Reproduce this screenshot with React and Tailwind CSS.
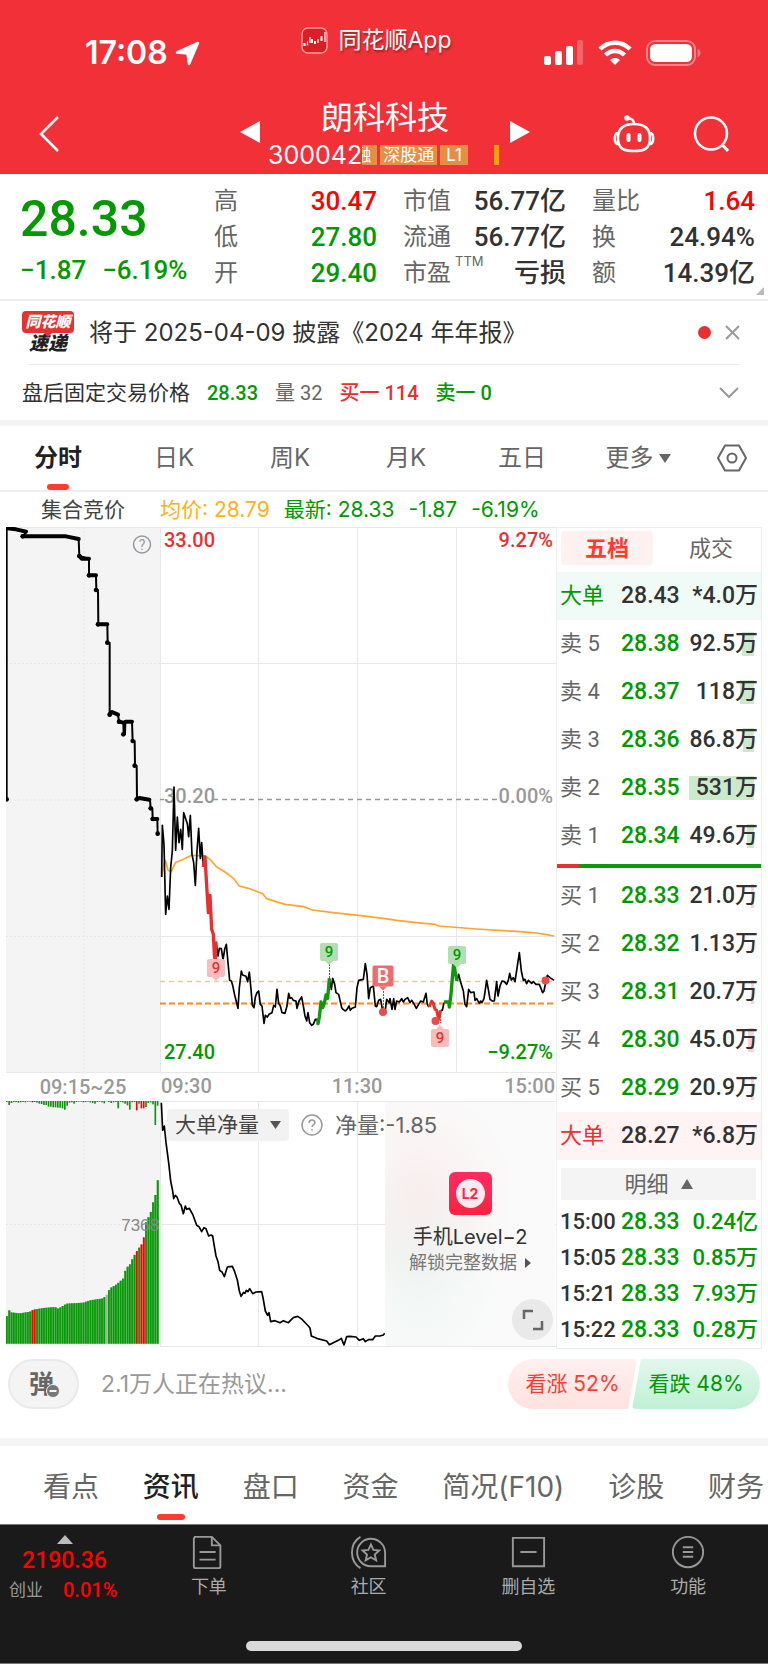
import { useState } from "react";
import clsx from "clsx";

const DIN = "[font-family:Roboto,'Noto_Sans_CJK_SC',sans-serif]";

const QUOTE_STATS = [
  [
    { label: "高", value: "30.47", color: "text-[#ff0000]" },
    { label: "低", value: "27.80", color: "text-[#009900]" },
    { label: "开", value: "29.40", color: "text-[#009900]" },
  ],
  [
    { label: "市值", value: "56.77亿", color: "text-[#323232]" },
    { label: "流通", value: "56.77亿", color: "text-[#323232]" },
    { label: "市盈", sup: "TTM", value: "亏损", color: "text-[#323232]" },
  ],
  [
    { label: "量比", value: "1.64", color: "text-[#ff0000]" },
    { label: "换", value: "24.94%", color: "text-[#323232]" },
    { label: "额", value: "14.39亿", color: "text-[#323232]" },
  ],
];

const PERIODS = ["分时", "日K", "周K", "月K", "五日"];

const SELLS = [
  { label: "卖 5", price: "28.38", vol: "92.5万", depth: 12 },
  { label: "卖 4", price: "28.37", vol: "118万", depth: 14 },
  { label: "卖 3", price: "28.36", vol: "86.8万", depth: 11 },
  { label: "卖 2", price: "28.35", vol: "531万", depth: 65 },
  { label: "卖 1", price: "28.34", vol: "49.6万", depth: 7 },
];

const BUYS = [
  { label: "买 1", price: "28.33", vol: "21.0万", depth: 3 },
  { label: "买 2", price: "28.32", vol: "1.13万", depth: 0 },
  { label: "买 3", price: "28.31", vol: "20.7万", depth: 3 },
  { label: "买 4", price: "28.30", vol: "45.0万", depth: 6 },
  { label: "买 5", price: "28.29", vol: "20.9万", depth: 3 },
];

const TRADES = [
  { time: "15:00", price: "28.33", vol: "0.24亿" },
  { time: "15:05", price: "28.33", vol: "0.85万" },
  { time: "15:21", price: "28.33", vol: "7.93万" },
  { time: "15:22", price: "28.33", vol: "0.28万" },
];

const SECTIONS = ["看点", "资讯", "盘口", "资金", "简况(F10)", "诊股", "财务"];

const AUCTION =
  "20,835 20,22 48,26 78,34 68,46 198,46 236,54 238,105 267,113 267,163 288,163 289,207 294,207 295,310 322,310 323,365 329,365 329,582 336,573 354,581 357,602 370,605 371,640 375,640 376,602 396,602 398,660 404,660 405,734 410,734 411,835 418,831 450,837 452,862 457,862 458,894 472,894 473,938";
const AUCTION_BOLD =
  "M22 22L48 25L78 32M68 46H198L236 54M238 105L245 113H267M267 163H288M294 310H322M329 580L336 573L354 581M357 602L370 605M376 602H396M411 834L418 831L448 836M457 894H472";
const AUCTION_DOTS = [[20, 835], [68, 46], [238, 105], [267, 163], [288, 207], [294, 310], [322, 365], [329, 581], [357, 602], [370, 640], [398, 660], [404, 734], [410, 835], [452, 862], [459, 894], [473, 938]];

const AVERAGE =
  "35,318 40,285 46,268 54,298 64,302 76,275 100,265 125,253 165,255 180,265 200,288 225,303 250,322 268,345 295,352 338,368 350,383 375,391 405,400 462,407 487,417 550,425 625,433 700,442 740,448 800,455 855,460 865,465 980,474 1110,482 1160,486 1190,491 1212,495";

const PRICE = [
  { color: "#000", width: 4, points: "35,318 37,163 42,220 47,430 52,375 57,415 62,290 67,240 72,48 77,238 82,138 87,215 92,175 97,235 101,125 106,140 112,158 116,197 121,133 126,250 131,275 136,343 141,240 146,172 151,262 155,215 160,288" },
  { color: "#000", width: 4, points: "198,512 204,555 208,532 214,533 219,567 224,535 229,520 234,575 239,628 244,630 248,643 254,672 264,712 268,650 274,600 278,612 288,616 293,632 298,603 303,655 307,703 312,710 316,678 321,665 326,660 331,700 336,705 342,757 346,733 352,738 357,730 366,725 371,703 376,708 381,655 386,697 391,705 396,725 405,727 411,705 416,667 420,682 425,680 430,688 438,690 441,712 447,690 455,678 460,705 465,735 470,750 474,725 479,755 485,763 490,760 496,745 503,745" },
  { color: "#000", width: 4, points: "538,622 544,655 548,622 554,640 558,665 566,670 575,710 580,716 586,720 591,715 597,705 601,718 606,712 616,708 621,650 626,628 640,625 646,578 651,610 656,683 661,650 670,645 676,705 680,707 686,688 692,685 698,720 705,725 710,685 718,695 720,683 726,715 731,683 735,715 740,690 748,693 755,683 760,693 765,685 773,680 780,695 785,688 791,697 799,712 806,700 812,690 820,693 828,667 832,700 837,708" },
  { color: "#000", width: 4, points: "872,718 877,718 882,695" },
  { color: "#000", width: 4, points: "921,630 926,610 931,630 940,660 945,700 950,707 956,655 962,665 972,663 975,688 980,683 988,697 992,690 996,695 1002,683 1010,628 1015,655 1020,685 1027,690 1033,690 1040,632 1044,675 1050,645 1056,630 1063,632 1070,640 1075,628 1079,607 1084,627 1090,620 1095,632 1108,545 1114,600 1120,628 1125,625 1130,638 1135,628 1145,637 1150,632 1158,640 1168,640 1178,665 1182,660 1188,630 1192,613 1200,620 1212,628" },
  { color: "#e93030", width: 9, points: "160,288 165,258 168,310 175,425 180,373 185,475 190,490 195,583 198,512" },
  { color: "#0a9a0a", width: 9, points: "503,745 504,758 508,738 513,693 518,710 523,697 528,672 533,682 538,622" },
  { color: "#e93030", width: 8, points: "837,708 845,690 850,697 855,715 860,718 866,745 872,718" },
  { color: "#0a9a0a", width: 9, points: "882,693 896,693 898,708 903,670 908,610 911,578 916,605 921,630" },
];

const NET =
  "484,95 488,178 493,165 498,215 506,275 512,330 518,360 521,383 526,373 531,378 538,397 543,402 550,428 556,405 560,415 568,412 578,430 590,463 597,467 605,482 612,470 618,473 626,495 633,492 638,495 642,520 648,555 654,572 659,598 666,603 673,617 682,588 690,587 697,586 704,602 712,627 718,660 723,676 731,664 735,667 739,658 744,662 749,653 758,668 768,663 785,662 789,680 796,720 803,733 807,725 812,752 825,749 840,755 850,749 865,755 880,740 893,736 905,744 925,765 930,771 934,795 950,802 980,810 988,821 1000,815 1018,806 1024,802 1032,822 1040,797 1050,796 1068,798 1078,808 1090,803 1096,812 1105,806 1118,806 1126,795 1140,795 1150,792 1154,787";

// tops of the auction volume bars, in chart units
const VOLUME_TOPS = [[18, 752], [25, 714], [32, 724], [60, 727], [90, 722], [100, 716], [130, 711], [165, 708], [175, 713], [200, 698], [250, 695], [270, 688], [310, 682], [320, 672], [330, 652], [350, 640], [370, 622], [378, 592], [390, 580], [400, 558], [412, 538], [425, 520], [432, 498], [438, 455], [445, 440], [452, 425], [460, 392], [466, 375], [473, 328]];

const UNMATCHED = [
  3, 12, 6, 3, 3, 5, 4, 3, 4, 2, 2, 4, 3, 5, 8, 9, 12, 12, 17, 17, 19, 19, 20, 20, 22, 26, 14, 5, 4, 8, 3, 2,
  2, 4, 3, 2, 4, 6, 8, 3, 2, 4, 7, 2, 3, 6, 4, 3, 22, 3, 4, 8, 13, 26, 4, 3, 28, 8, 22, 22, 18, 6, 4, 10, 72, 14,
];

function topAt(x) {
  const i = VOLUME_TOPS.findIndex(([px]) => px >= x);
  if (i <= 0) return VOLUME_TOPS[i === 0 ? 0 : VOLUME_TOPS.length - 1][1];
  const [x0, y0] = VOLUME_TOPS[i - 1];
  const [x1, y1] = VOLUME_TOPS[i];
  return y0 + ((y1 - y0) * (x - x0)) / (x1 - x0);
}

function barColor(i) {
  if ([11, 12, 56, 58, 59].includes(i)) return ["#ff0000", "#ff6666"];
  if (i === 43) return ["#aaa", "#bbb"];
  return ["#0b980b", "#56b656"];
}

function StatusBar() {
  return (
    <div className="grid h-[90px] grid-cols-[1fr_auto_1fr] text-white">
      <div className="flex items-center gap-[7px] pt-4 pl-[85px]">
        <span className="text-[32px] leading-9 font-semibold">17:08</span>
        <svg className="h-[25px] w-[25px]" viewBox="0 0 25 25" fill="#fff" stroke="#fff" strokeWidth="2.500" strokeLinejoin="round">
          <path d="M23 2 14 23l-1.500-10.500L2 11.500z" />
        </svg>
      </div>
      <div className="flex h-20 items-center gap-[10px] pr-[15px]">
        <svg className="h-[27px] w-[27px]" viewBox="0 0 27 27">
          <rect x="1" y="1" width="25" height="25" rx="6" fill="#d81f25" stroke="#ff9a9c" strokeWidth="1.500" />
          <path d="M3.500 16v3M11 12v4M14 14v3M20.500 9v5" stroke="#fff" strokeWidth="2" />
          <path d="M6.500 14.500v4M9 10v6M17 12v4M24 5v10" stroke="#fff" strokeWidth="1.200" />
        </svg>
        <span className="text-[23px] leading-7 [text-shadow:1px_2px_2px_rgba(0,0,0,0.35)]">同花顺App</span>
      </div>
      <div className="flex items-center justify-end gap-[14px] pt-4 pr-[67px]">
        <svg className="h-[26px] w-10" viewBox="0 0 40 26" fill="#fff">
          <rect x="0" y="16" width="7" height="9" rx="2" />
          <rect x="11" y="11" width="7" height="14" rx="2" />
          <rect x="22" y="6" width="7" height="19" rx="2" />
          <rect x="33" y="0" width="6" height="25" rx="2" opacity=".25" />
        </svg>
        <svg className="h-[26px] w-[34px]" viewBox="0 0 34 26" fill="none" stroke="#fff" strokeWidth="4.500">
          <path d="M2 9c8-8.500 22-8.500 30 0" />
          <path d="M7.500 15c5.500-5.500 13.500-5.500 19 0" />
          <path d="M17 25l-5-5c3-2.600 7-2.600 10 0z" fill="#fff" stroke="none" />
        </svg>
        <svg className="h-[26px] w-[55px]" viewBox="0 0 55 26">
          <rect x="1" y="1" width="48" height="24" rx="8" fill="none" stroke="#fff" strokeOpacity=".4" strokeWidth="2" />
          <rect x="4" y="4" width="42" height="18" rx="5.500" fill="#fff" />
          <path d="M51.500 9c4 1 4 7 0 8z" fill="#fff" opacity=".4" />
        </svg>
      </div>
    </div>
  );
}

function TitleBar() {
  return (
    <div className="grid h-[84px] grid-cols-[1fr_auto_1fr] text-white">
      <div className="flex items-center pt-1 pl-[39px]">
        <button aria-label="返回">
          <svg className="h-9 w-5" viewBox="0 0 20 36" fill="none" stroke="#fff" strokeWidth="2.500">
            <path d="M19 1 2 18l17 17" />
          </svg>
        </button>
      </div>
      <div className="flex items-center gap-2 pl-[2px]">
        <button aria-label="上一只">
          <svg className="h-[22px] w-5" viewBox="0 0 20 22" fill="#fff"><path d="M20 0v22L0 11z" /></svg>
        </button>
        <div className="flex w-[234px] flex-col items-center">
          <h1 className="text-[32px] leading-[46px]">朗科科技</h1>
          <div className="flex h-7 w-full items-center gap-[3px] pr-[3px]">
            <span className="text-[25px] leading-7">300042</span>
            <span className="-ml-[3px] flex h-5 w-[15px] justify-end overflow-hidden bg-[#e58e46] pr-[6px] text-[17px] leading-5">融</span>
            <span className="h-5 bg-[#e58e46] px-[3px] text-[17px] leading-5">深股通</span>
            <span className="h-5 bg-[#e58e46] px-[6px] text-[17px] leading-5">L1</span>
            <span className="ml-auto h-5 w-[5px] bg-[#ff9d10]" />
          </div>
        </div>
        <button aria-label="下一只">
          <svg className="h-[22px] w-5" viewBox="0 0 20 22" fill="#fff"><path d="M0 0v22l20-11z" /></svg>
        </button>
      </div>
      <div className="flex items-center justify-end gap-[38px] pt-1 pr-[39px]">
        <button aria-label="助手">
          <svg className="h-[38px] w-[42px]" viewBox="0 0 42 38" fill="none" stroke="#fff" strokeWidth="2.500" strokeLinecap="round">
            <path d="M21 9c9 0 16 3 16 14s-6 13-16 13S5 34 5 23 12 9 21 9z" />
            <path d="M4 18c-3 2-3 9 0 11M38 18c3 2 3 9 0 11" />
            <path d="M21 9c0-4-2-5-6-6" />
            <circle cx="14" cy="3" r="1.500" fill="#fff" />
            <path d="M15.500 20v5M26.500 20v5" strokeWidth="4" />
          </svg>
        </button>
        <button aria-label="搜索">
          <svg className="h-9 w-9" viewBox="0 0 36 36" fill="none" stroke="#fff" strokeWidth="2.500">
            <circle cx="18" cy="17.500" r="16" />
            <path d="M29 28.500 35 35" strokeWidth="3" />
          </svg>
        </button>
      </div>
    </div>
  );
}

function Quote() {
  return (
    <section className="relative grid grid-cols-[168fr_163fr_163fr_163fr] gap-x-[26px] border-b-2 border-[#eee] pt-[9px] pr-[13px] pb-2 pl-5">
      <div className={clsx("whitespace-nowrap text-[#009900]", DIN)}>
        <div className="pt-3 text-[50px] leading-[48px] font-medium">28.33</div>
        <div className="flex gap-4 pt-[11px] text-[26px] leading-8 font-medium">
          <span>−1.87</span>
          <span>−6.19%</span>
        </div>
      </div>
      {QUOTE_STATS.map((col) => (
        <dl key={col[0].label}>
          {col.map((s) => (
            <div key={s.label} className="flex h-9 items-center justify-between whitespace-nowrap">
              <dt className="flex text-2xl leading-8 text-[#666]">
                {s.label}
                {s.sup && <sup className="-top-1 pl-1 text-[13px] leading-4">{s.sup}</sup>}
              </dt>
              <dd className={clsx("text-[26px] leading-8 font-medium", DIN, s.color)}>{s.value}</dd>
            </div>
          ))}
        </dl>
      ))}
      <svg className="absolute right-1 bottom-1 h-2 w-2" viewBox="0 0 8 8" fill="#bbb"><path d="M8 0v8H0z" /></svg>
    </section>
  );
}

function Notice() {
  return (
    <section className="border-b-[6px] border-[#f4f4f4] px-[22px]">
      <div className="flex h-[63px] items-center">
        <div className="flex w-[52px] flex-col items-center">
          <span className="relative rounded-sm bg-[#e93030] px-[3px] text-[15px] leading-[22px] font-black text-white italic">
            同花顺
            <span className="absolute top-full left-1/2 h-0 w-0 -translate-x-1/2 border-x-4 border-t-4 border-x-transparent border-t-[#e93030]" />
          </span>
          <span className="text-[19px] leading-[22px] font-black text-[#222] italic">速递</span>
        </div>
        <a href="#report" className="flex-1 pl-[15px] text-2xl leading-8 text-[#323232]">
          将于 2025-04-09 披露《2024 年年报》
        </a>
        <span className="h-[13px] w-[13px] rounded-full bg-[#e93030]" />
        <button aria-label="关闭" className="mr-[6px] ml-[14px]">
          <svg className="h-[15px] w-[15px]" viewBox="0 0 15 15" stroke="#999" strokeWidth="2"><path d="M1 1l13 13M14 1 1 14" /></svg>
        </button>
      </div>
      <div className="mx-[7px] h-px bg-[#e8e8e8]" />
      <div className={clsx("flex h-[55px] items-center gap-[17px] text-[21px] leading-7", DIN)}>
        <span className="text-[#323232]">盘后固定交易价格</span>
        <span className="text-[20px] font-medium text-[#009900]">28.33</span>
        <span className="text-[20px] text-[#666]">量 32</span>
        <span className="text-[20px] font-medium text-[#e93030]">买一 114</span>
        <span className="text-[20px] font-medium text-[#009900]">卖一 0</span>
        <button aria-label="展开" className="mr-[7px] ml-auto">
          <svg className="h-[11px] w-5" viewBox="0 0 20 11" fill="none" stroke="#999" strokeWidth="2"><path d="M1 1l9 9 9-9" /></svg>
        </button>
      </div>
    </section>
  );
}

function PeriodTabs({ active, onChange }) {
  return (
    <nav className="flex h-[66px] border-b-2 border-[#eee] text-2xl leading-8 text-[#666]">
      {PERIODS.map((p) => (
        <button
          key={p}
          onClick={() => onChange(p)}
          className={clsx("relative flex-1", active === p && "font-bold text-[#222]")}
        >
          {p}
          {active === p && <span className="absolute bottom-0 left-1/2 h-[6px] w-[22px] -translate-x-1/2 rounded-sm bg-[#ff3b30]" />}
        </button>
      ))}
      <button className="flex flex-1 items-center justify-center gap-[5px]">
        更多
        <svg className="h-[9px] w-3" viewBox="0 0 12 9" fill="#666"><path d="M0 0h12L6 9z" /></svg>
      </button>
      <button aria-label="设置" className="flex w-[72px] items-center justify-center">
        <svg className="h-7 w-[30px]" viewBox="0 0 30 28" fill="none" stroke="#666" strokeWidth="2" strokeLinejoin="round">
          <path d="M8 1.500h14L29 14l-7 12.500H8L1 14z" />
          <circle cx="15" cy="14" r="4.500" />
        </svg>
      </button>
    </nav>
  );
}

function Flag({ x, y, fill, color, text, down, big }) {
  const s = big ? 21 : 18;
  return (
    <g>
      <rect x={x - s / 2} y={y - s / 2} width={s} height={s} rx="2" fill={fill} />
      <path d={down ? `M${x - 4} ${y - s / 2}h8l-4-4z` : `M${x - 4} ${y + s / 2}h8l-4 4z`} fill={fill} />
      <text x={x} y={y + (big ? 7 : 5)} textAnchor="middle" fill={color} fontSize={big ? 20 : 15} fontWeight="500">{text}</text>
    </g>
  );
}

function PriceChart() {
  return (
    <svg className={clsx("block w-full", DIN)} viewBox="6 526 550 574">
      <rect x="6" y="526" width="154" height="545" fill="#f4f4f4" />
      <g stroke="#e8e8e8" strokeDasharray="2 2">
        <path d="M84 526v545M6 662.500h154M6 799h154M6 935.500h154" />
      </g>
      <path d="M6 526.500h550M160.500 526v545M258.500 526v545M357.500 526v545M456.500 526v545M160 662.500h396M160 935.500h396M6 1071.500h550" stroke="#e8e8e8" fill="none" />
      <path d="M160 798.500h4M213 798.500h284" stroke="#999" strokeWidth="1.500" strokeDasharray="5 4" />
      <path d="M160 980.500h394" stroke="#e8c9a0" strokeWidth="1.500" strokeDasharray="5 4" />
      <path d="M160 1002.500h394" stroke="#ff8a1f" strokeWidth="2" strokeDasharray="6 3" />

      <g transform="translate(0 520) scale(.333333)" fill="none" stroke="#000" strokeLinejoin="round" strokeLinecap="round">
        <polyline points={AUCTION} strokeWidth="6" />
        <path d={AUCTION_BOLD} strokeWidth="12" />
        {AUCTION_DOTS.map(([x, y]) => (
          <circle key={`${x}-${y}`} cx={x} cy={y} r="7" fill="#000" stroke="none" />
        ))}
      </g>

      <g fontSize="20" fontWeight="500">
        <text x="164" y="546" fill="#e93030">33.00</text>
        <text x="553" y="546" fill="#e93030" textAnchor="end">9.27%</text>
        <text x="164" y="802" fill="#999">30.20</text>
        <text x="553" y="802" fill="#999" textAnchor="end">0.00%</text>
        <text x="164" y="1058" fill="#009900">27.40</text>
        <text x="553" y="1058" fill="#009900" textAnchor="end">−9.27%</text>
      </g>

      <g transform="translate(150 770) scale(.333333)" fill="none" strokeLinejoin="round">
        <polyline points={AVERAGE} stroke="#ffa52b" strokeWidth="5" />
        {PRICE.map((seg) => (
          <polyline key={seg.points} points={seg.points} stroke={seg.color} strokeWidth={seg.width + 1} />
        ))}
      </g>

      <path d="M329.500 963v14" stroke="#009900" strokeDasharray="2 1" />
      <path d="M383.500 987v20M440.500 1012v10" stroke="#e93030" strokeDasharray="2 1" />
      <g fill="#ea4b4d">
        <circle cx="383" cy="1011" r="4" />
        <circle cx="435.500" cy="1020" r="4" />
        <circle cx="545.500" cy="979.500" r="4" />
      </g>
      <Flag x={216} y={967} fill="#f9bcbc" color="#e93030" text="9" />
      <Flag x={329} y={951} fill="#b2dfb2" color="#009900" text="9" />
      <Flag x={457} y={954} fill="#b2dfb2" color="#009900" text="9" />
      <Flag x={440} y={1037} fill="#f9bcbc" color="#e93030" text="9" down />
      <Flag x={383} y={975} fill="#f06b6d" color="#fff" text="B" big />

      <g fill="none" stroke="#999" strokeWidth="1.500">
        <circle cx="142" cy="543.500" r="8.500" />
      </g>
      <text x="142" y="549" textAnchor="middle" fontSize="14" fill="#999">?</text>

      <g fontSize="20" fill="#999" fontWeight="500">
        <text x="83" y="1093" textAnchor="middle">09:15~25</text>
        <text x="161" y="1092">09:30</text>
        <text x="357" y="1092" textAnchor="middle">11:30</text>
        <text x="555" y="1092" textAnchor="end">15:00</text>
      </g>
    </svg>
  );
}

function NetChart() {
  return (
    <div className="relative">
      <svg className={clsx("block w-full", DIN)} viewBox="6 1100 550 246">
        <rect x="6" y="1100" width="154" height="245" fill="#f4f4f4" />
        <path d="M84 1100v245M6 1223.500h154" stroke="#e8e8e8" strokeDasharray="2 2" />
        <path d="M6 1100.500h550M160.500 1100v245M258.500 1100v245M357.500 1100v245M160 1223.500h396M160 1345.500h396" stroke="#e8e8e8" fill="none" />
        <g transform="translate(0 1070) scale(.333333)">
          {UNMATCHED.map((h, i) => {
            const x = 18 + i * 6.96;
            const [main, light] = barColor(i);
            const top = topAt(x + 3);
            return (
              <g key={i}>
                <rect x={x} y={top} width="7" height={818 - top} fill={light} />
                <rect x={x} y={top} width="5" height={818 - top} fill={main} />
                <rect x={x} y="90" width="5" height={h} fill={main} />
              </g>
            );
          })}
          <polyline points={NET} fill="none" stroke="#000" strokeWidth="5" strokeLinejoin="round" />
        </g>
        <text x="159" y="1230" textAnchor="end" fontSize="17" fill="#888" className="[font-family:'Liberation_Sans',sans-serif]">7368</text>
      </svg>

      <div className="absolute top-px right-px bottom-px flex w-[170px] flex-col items-center bg-[#fafafa] bg-[radial-gradient(ellipse_at_20%_38%,rgba(255,90,90,0.07),transparent_50%),radial-gradient(ellipse_at_20%_68%,rgba(60,200,150,0.06),transparent_45%)] pt-[70px]">
        <span className="flex h-[43px] w-[43px] items-center justify-center rounded-md bg-gradient-to-t from-[#ff2040] to-[#ff2b62]">
          <span className="flex h-[29px] w-[29px] items-center justify-center rounded-full bg-[#ffe9ee] text-[14px] leading-4 font-bold text-[#ff2448]">L2</span>
        </span>
        <span className="pt-2 text-[20px] leading-7 text-[#323232]">手机Level−2</span>
        <a href="#level2" className="flex items-center gap-2 text-[18px] leading-6 text-[#777]">
          解锁完整数据
          <svg className="h-[10px] w-[6px]" viewBox="0 0 6 10" fill="#555"><path d="M0 0l6 5-6 5z" /></svg>
        </a>
      </div>
      <button aria-label="全屏" className="absolute right-[3px] bottom-[7px] flex h-[41px] w-[41px] items-center justify-center rounded-full bg-[#e9e9e9]">
        <svg className="h-[22px] w-[22px]" viewBox="0 0 22 22" fill="none" stroke="#666" strokeWidth="2.500">
          <path d="M2 10V2h9M20 12v8h-9" />
        </svg>
      </button>

      <div className="absolute top-2 left-[161px] flex items-center text-[21px] leading-8 text-[#666]">
        <button className="flex items-center gap-[11px] rounded-sm bg-[#f2f2f2] px-2 text-[#444]">
          大单净量
          <svg className="h-2 w-[11px]" viewBox="0 0 11 8" fill="#555"><path d="M0 0h11L5.500 8z" /></svg>
        </button>
        <svg className="mr-3 ml-3 h-[22px] w-[22px]" viewBox="0 0 22 22" fill="none" stroke="#999" strokeWidth="1.500">
          <circle cx="11" cy="11" r="10" />
          <path d="M8 9c0-4 6-4 6-.500 0 2-3 2.200-3 4.500M11 15v1.500" />
        </svg>
        <span className="text-[22px]">净量:-1.85</span>
      </div>
    </div>
  );
}

function Rows({ rows, barClass }) {
  return rows.map((r) => (
    <tr key={r.label} className="h-12">
      <td className="w-[64px] pl-[3px] text-[22px] text-[#666]">{r.label}</td>
      <td className="font-medium text-[#009900]">{r.price}</td>
      <td className="relative pr-[3px] text-right font-medium text-[#323232]">
        <span className={clsx("absolute top-3 right-[7px] h-6", barClass)} style={{ width: r.depth }} />
        <span className="relative">{r.vol}</span>
      </td>
    </tr>
  ));
}

function BigOrder({ price, vol, rowClass, labelClass }) {
  return (
    <tr className={clsx("h-12", rowClass)}>
      <td className={clsx("w-[64px] pl-[3px] text-[22px]", labelClass)}>大单</td>
      <td className="font-medium text-[#323232]">{price}</td>
      <td className="pr-[3px] text-right font-medium text-[#323232]">{vol}</td>
    </tr>
  );
}

function OrderBook() {
  const table = clsx("w-full text-[23px] leading-6 whitespace-nowrap", DIN);
  return (
    <aside className="w-[206px] border border-[#eee]">
      <div className="flex h-11 items-start pt-[3px] pl-1 text-[22px] leading-[34px]">
        <button className="w-[92px] rounded-sm bg-[#fff1f0] font-bold text-[#ff3b30]">五档</button>
        <button className="flex-1 pl-2 text-[#666]">成交</button>
      </div>
      <table className={table}>
        <tbody>
          <BigOrder price="28.43" vol="*4.0万" rowClass="bg-[#f0faf6]" labelClass="text-[#009900]" />
          <Rows rows={SELLS} barClass="bg-[#cbeacb]" />
        </tbody>
      </table>
      <div className="my-1 flex h-1 bg-[#0a9a0a]">
        <span className="w-[22px] bg-[#e93030]" />
      </div>
      <table className={table}>
        <tbody>
          <Rows rows={BUYS} barClass="bg-[#fdd0d2]" />
          <BigOrder price="28.27" vol="*6.8万" rowClass="bg-[#fff3f3]" labelClass="text-[#e93030]" />
        </tbody>
      </table>
      <button className="mx-1 mt-2 mb-1 flex h-8 w-[195px] items-center justify-center gap-3 bg-[#f4f4f4] text-[22px] leading-8 text-[#666]">
        明细
        <svg className="h-[10px] w-3" viewBox="0 0 12 10" fill="#666"><path d="M6 0l6 10H0z" /></svg>
      </button>
      <table className={table}>
        <tbody>
          {TRADES.map((t) => (
            <tr key={t.time} className="h-9 text-[22px] font-medium">
              <td className="w-[64px] pl-[3px] text-[#323232]">{t.time}</td>
              <td className="text-[23px] text-[#009900]">{t.price}</td>
              <td className="pr-[3px] text-right text-[#009900]">{t.vol}</td>
            </tr>
          ))}
        </tbody>
      </table>
    </aside>
  );
}

function Discussion() {
  return (
    <section className="flex h-[97px] items-start border-b-8 border-[#f4f4f4] px-2 pt-[10px]">
      <button className="relative flex h-[50px] w-[71px] items-center justify-center rounded-full border-2 border-[#eaeaea] bg-[#f4f4f4] pr-1 text-[25px] leading-8 font-bold text-[#666]">
        弹
        <svg className="absolute right-[17px] bottom-[9px] h-[14px] w-[14px]" viewBox="0 0 14 14">
          <circle cx="7" cy="7" r="6.500" fill="#777" stroke="#f4f4f4" />
          <path d="M3.500 7h7" stroke="#f4f4f4" strokeWidth="2" />
        </svg>
      </button>
      <input
        type="text"
        aria-label="评论"
        placeholder="2.1万人正在热议..."
        className="h-[50px] min-w-0 flex-1 pl-[22px] text-[23px] leading-8 placeholder:text-[#999]"
      />
      <div className="flex text-[21px] leading-[50px] whitespace-nowrap">
        <button className="w-[129px] bg-gradient-to-b from-[#fff0ef] to-[#ffe2df] text-[#ff3b30] [border-radius:25px_4px_4px_25px] [clip-path:polygon(0_0,100%_0,93%_100%,0_100%)]">
          看涨 52%
        </button>
        <button className="-ml-[5px] w-[128px] bg-gradient-to-b from-[#e2f8ec] to-[#bff0d4] text-[#009900] [border-radius:4px_25px_25px_4px] [clip-path:polygon(7%_0,100%_0,100%_100%,0_100%)]">
          看跌 48%
        </button>
      </div>
    </section>
  );
}

function SectionTabs({ active, onChange }) {
  return (
    <nav className="flex h-[78px] justify-between pr-1 pl-[43px] text-[28px] leading-10 whitespace-nowrap text-[#666]">
      {SECTIONS.map((s) => (
        <button
          key={s}
          onClick={() => onChange(s)}
          className={clsx("relative pt-[3px]", active === s && "font-medium text-[#222]")}
        >
          {s}
          {active === s && <span className="absolute bottom-1 left-1/2 h-[6px] w-7 -translate-x-1/2 rounded-full bg-[#ff3b30]" />}
        </button>
      ))}
    </nav>
  );
}

const NAV = [
  {
    label: "下单",
    icon: (
      <>
        <path d="M4 2h18l9 9v22a2 2 0 0 1-2 2H5a2 2 0 0 1-2-2V4z" />
        <path d="M22 2v9h9M9 18h17M9 26h17" />
      </>
    ),
  },
  {
    label: "社区",
    icon: (
      <>
        <path d="M21 4a15 15 0 0 1 15 15v14H21a14.500 14.500 0 0 1 0-29zM10 2C-2 9-2 28 10 35" />
        <path d="M21 10l2.600 5.800 6.200.6-4.700 4.200 1.400 6.200-5.500-3.300-5.500 3.300 1.400-6.200-4.700-4.200 6.200-.6z" />
      </>
    ),
  },
  {
    label: "删自选",
    icon: <path d="M3 3h33v30H3zM11 18h17" />,
  },
  {
    label: "功能",
    icon: (
      <>
        <circle cx="19" cy="18" r="16" />
        <path d="M13.500 13h11M13.500 18h11M13.500 23h11" />
      </>
    ),
  },
];

function BottomNav() {
  return (
    <footer className="border-y border-[#777] bg-[#1a1a1a]">
      <nav className="flex h-[116px] pt-[10px]">
        <a href="#index" className={clsx("flex w-[129px] flex-col items-center text-[#ff0000]", DIN)}>
          <svg className="h-[9px] w-4" viewBox="0 0 16 9" fill="#bbb"><path d="M8 0l8 9H0z" /></svg>
          <span className="text-[23px] leading-[34px] font-medium">2190.36</span>
          <span className="flex w-full items-center gap-5 pl-[9px] text-[20px] leading-6 font-medium">
            <span className="text-[17px] font-normal text-[#999]">创业</span>
            0.01%
          </span>
        </a>
        {NAV.map((n) => (
          <a key={n.label} href={`#${n.label}`} className="flex flex-1 flex-col items-center gap-[2px] text-[18px] leading-7 text-[#aaa]">
            <svg className="h-9 w-9" viewBox="0 0 38 38" fill="none" stroke="#999" strokeWidth="2">{n.icon}</svg>
            {n.label}
          </a>
        ))}
      </nav>
      <div className="mx-auto mb-3 h-[10px] w-[36%] rounded-full bg-[#d9d9d9]" />
    </footer>
  );
}

export default function App() {
  const [period, setPeriod] = useState("分时");
  const [section, setSection] = useState("资讯");

  return (
    <div className="bg-white [font-family:Inter,'Noto_Sans_CJK_SC',sans-serif]">
      <header className="bg-[#f23038]">
        <StatusBar />
        <TitleBar />
      </header>
      <Quote />
      <Notice />
      <PeriodTabs active={period} onChange={setPeriod} />

      <div className="flex h-[35px] items-center pl-[41px] text-[21px] leading-7">
        <span className="w-[119px] text-[#444]">集合竞价</span>
        <span className="text-[#ffb020]">均价: 28.79</span>
        <span className="ml-[14px] text-[#009900]">最新: 28.33</span>
        <span className="ml-[14px] text-[#009900]">-1.87</span>
        <span className="ml-[14px] text-[#009900]">-6.19%</span>
      </div>

      <main className="flex items-start px-[6px]">
        <div className="min-w-0 flex-1">
          <PriceChart />
          <NetChart />
        </div>
        <OrderBook />
      </main>

      <Discussion />
      <SectionTabs active={section} onChange={setSection} />
      <BottomNav />
    </div>
  );
}
